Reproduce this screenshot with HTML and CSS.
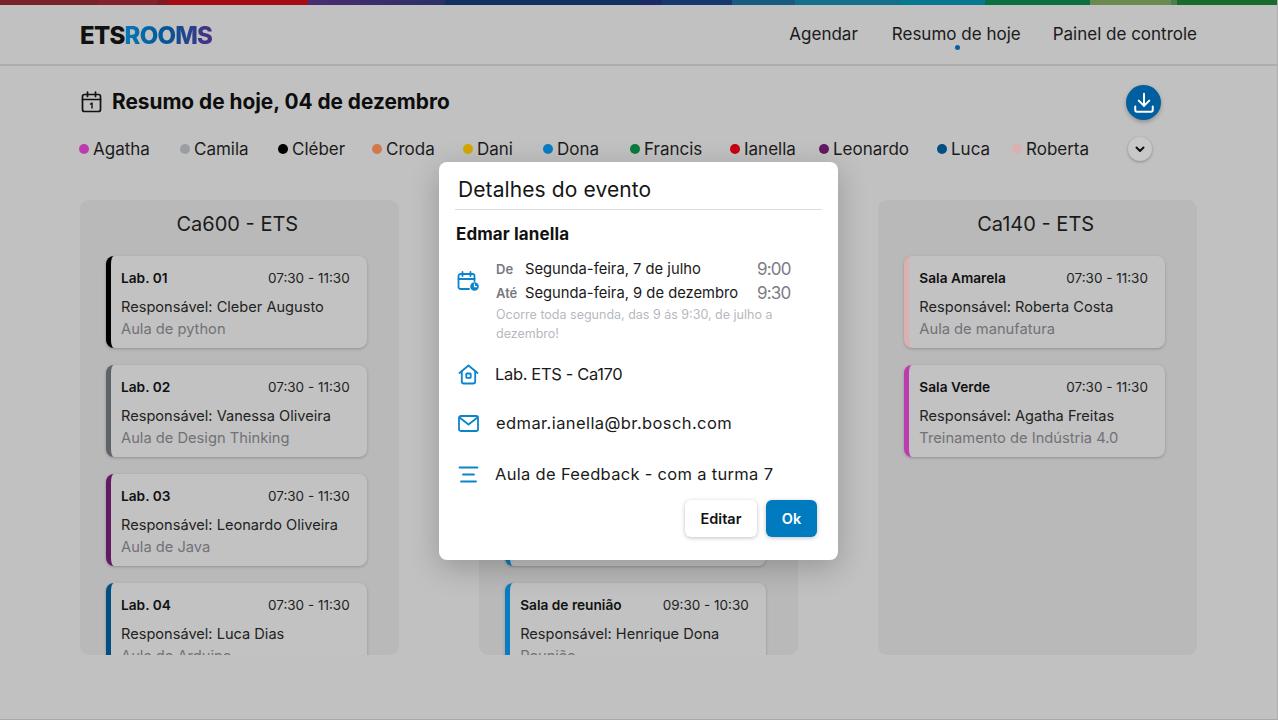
FILE: index.html
```html
<!DOCTYPE html>
<html lang="pt-BR">
<head>
<meta charset="utf-8">
<title>ETS Rooms</title>
<link rel="stylesheet" href="styles.css">
</head>
<body>
<div class="page">
  <div class="rainbow"></div>
  <header class="topbar">
    <div class="logo">ETS<span class="logo-accent">ROOMS</span></div>
    <nav class="nav">
      <a class="nav-link">Agendar</a>
      <a class="nav-link is-active">Resumo de hoje</a>
      <a class="nav-link">Painel de controle</a>
    </nav>
  </header>
  <main class="content">
    <div class="title-row">
      <h1 class="page-title">
        <svg class="title-icon" viewBox="0 0 22 22" fill="none" stroke="#111" stroke-width="1.7" stroke-linecap="round" stroke-linejoin="round"><rect x="1.5" y="3.5" width="18" height="17" rx="2"/><path d="M1.5 8.500h18M6.500 1v4.500M14.500 1v4.500"/><path d="M9.500 13l1.500-1v5" stroke-width="1.400"/></svg>
        Resumo de hoje, 04 de dezembro
      </h1>
      <button class="download-btn" aria-label="Baixar">
        <svg viewBox="0 0 24 24" width="28" height="28" fill="none" stroke="#fff" stroke-width="1.700" stroke-linecap="round" stroke-linejoin="round"><path d="M12 4v10.500M7.500 10l4.500 4.500 4.500-4.500"/><path d="M4.500 15v3a1.500 1.500 0 0 0 1.500 1.500h12a1.500 1.500 0 0 0 1.500-1.500v-3"/></svg>
      </button>
    </div>
    <div class="legend">
      <span class="legend-item"><i class="dot c-agatha"></i>Agatha</span>
      <span class="legend-item"><i class="dot c-camila"></i>Camila</span>
      <span class="legend-item"><i class="dot c-cleber"></i>Cléber</span>
      <span class="legend-item"><i class="dot c-croda"></i>Croda</span>
      <span class="legend-item"><i class="dot c-dani"></i>Dani</span>
      <span class="legend-item"><i class="dot c-dona"></i>Dona</span>
      <span class="legend-item"><i class="dot c-francis"></i>Francis</span>
      <span class="legend-item"><i class="dot c-ianella"></i>Ianella</span>
      <span class="legend-item"><i class="dot c-leonardo"></i>Leonardo</span>
      <span class="legend-item"><i class="dot c-luca"></i>Luca</span>
      <span class="legend-item"><i class="dot c-roberta"></i>Roberta</span>
      <button class="more-btn" aria-label="Mais">
        <svg viewBox="0 0 12 12" width="12" height="12" fill="none" stroke="#111" stroke-width="2" stroke-linecap="round" stroke-linejoin="round"><path d="M2.500 4.500L6 8l3.500-3.500"/></svg>
      </button>
    </div>
    <section class="columns">
      <div class="column">
        <h2 class="column-title">Ca600 - ETS</h2>
        <article class="card b-cleber"><div class="card-head"><span class="card-room">Lab. 01</span><span class="card-time">07:30 - 11:30</span></div><p class="card-owner">Responsável: Cleber Augusto</p><p class="card-desc">Aula de python</p></article>
        <article class="card b-camila"><div class="card-head"><span class="card-room">Lab. 02</span><span class="card-time">07:30 - 11:30</span></div><p class="card-owner">Responsável: Vanessa Oliveira</p><p class="card-desc">Aula de Design Thinking</p></article>
        <article class="card b-leonardo"><div class="card-head"><span class="card-room">Lab. 03</span><span class="card-time">07:30 - 11:30</span></div><p class="card-owner">Responsável: Leonardo Oliveira</p><p class="card-desc">Aula de Java</p></article>
        <article class="card b-luca"><div class="card-head"><span class="card-room">Lab. 04</span><span class="card-time">07:30 - 11:30</span></div><p class="card-owner">Responsável: Luca Dias</p><p class="card-desc">Aula de Arduino</p></article>
      </div>
      <div class="column">
        <div class="column-title"></div>
        <article class="card b-dona"></article>
        <article class="card b-dona"></article>
        <article class="card b-dona"></article>
        <article class="card b-dona"><div class="card-head"><span class="card-room">Sala de reunião</span><span class="card-time">09:30 - 10:30</span></div><p class="card-owner">Responsável: Henrique Dona</p><p class="card-desc">Reunião</p></article>
      </div>
      <div class="column">
        <h2 class="column-title">Ca140 - ETS</h2>
        <article class="card b-roberta"><div class="card-head"><span class="card-room">Sala Amarela</span><span class="card-time">07:30 - 11:30</span></div><p class="card-owner">Responsável: Roberta Costa</p><p class="card-desc">Aula de manufatura</p></article>
        <article class="card b-agatha"><div class="card-head"><span class="card-room">Sala Verde</span><span class="card-time">07:30 - 11:30</span></div><p class="card-owner">Responsável: Agatha Freitas</p><p class="card-desc">Treinamento de Indústria 4.0</p></article>
      </div>
    </section>
  </main>

  <div class="modal" role="dialog">
    <h3 class="modal-title">Detalhes do evento</h3>
    <p class="modal-name">Edmar Ianella</p>
    <div class="modal-when">
      <svg class="icon icon-cal" viewBox="0 0 23 21" fill="none" stroke="#0a84cc" stroke-width="1.800" stroke-linecap="round" stroke-linejoin="round"><path d="M12 18H3.500A2 2 0 0 1 1.500 16V5a2 2 0 0 1 2-2h12a2 2 0 0 1 2 2v5"/><path d="M1.500 8h16M5.500 1v4M13.500 1v4"/><circle cx="17.500" cy="15.500" r="4.300" fill="#0a84cc" stroke="none"/><path d="M17.500 13.200v2.500h2" stroke="#fff" stroke-width="1.200"/></svg>
      <div class="when-body">
        <div class="when-row"><span class="when-label">De</span><span class="when-date">Segunda-feira, 7 de julho</span><span class="when-time">9:00</span></div>
        <div class="when-row"><span class="when-label">Até</span><span class="when-date">Segunda-feira, 9 de dezembro</span><span class="when-time">9:30</span></div>
        <p class="when-note">Ocorre toda segunda, das 9 ás 9:30, de julho a dezembro!</p>
      </div>
    </div>
    <div class="modal-row row-place">
      <svg class="icon" viewBox="0 0 21 21" fill="none" stroke="#0a84cc" stroke-width="1.800" stroke-linecap="round" stroke-linejoin="round"><path d="M1.500 9L10.500 1.500 19.500 9"/><path d="M3.800 7.500V17.500a2 2 0 0 0 2 2h9.400a2 2 0 0 0 2-2V7.500"/><rect x="8.300" y="9.500" width="4.400" height="4.400" rx=".6"/></svg>
      <span class="row-text">Lab. ETS - Ca170</span>
    </div>
    <div class="modal-row row-mail">
      <svg class="icon" viewBox="0 0 21 17" fill="none" stroke="#0a84cc" stroke-width="1.800" stroke-linecap="round" stroke-linejoin="round"><rect x="1" y="1" width="19" height="15" rx="1.800"/><path d="M1.500 2.500l9 7 9-7"/></svg>
      <span class="row-text">edmar.ianella@br.bosch.com</span>
    </div>
    <div class="modal-row row-desc">
      <svg class="icon" viewBox="0 0 21 17" fill="none" stroke="#0a84cc" stroke-width="1.800" stroke-linecap="round"><path d="M1.500 1.500h18M5 8.500h11M3 15.500h15"/></svg>
      <span class="row-text">Aula de Feedback - com a turma 7</span>
    </div>
    <div class="modal-actions">
      <button class="btn btn-light">Editar</button>
      <button class="btn btn-primary">Ok</button>
    </div>
  </div>
</div>
</body>
</html>
```

FILE: styles.css
```css
* { box-sizing: border-box; }
html, body { margin: 0; padding: 0; }
body {
  width: 1278px;
  height: 720px;
  overflow: hidden;
  background: #c1c1c1;
  font-family: "Inter", "Noto Sans", sans-serif;
  color: #141414;
}
p, h1, h2, h3 { margin: 0; font-weight: 400; }

.page {
  position: relative;
  height: 720px;
  border-bottom: 1px solid #a9a9a9;
  border-right: 1px solid #b0b0b0;
  overflow: hidden;
}

.rainbow {
  height: 5px;
  width: 1278px;
  background: linear-gradient(90deg,
    #7a2028 0, #7a2028 98px, #83222c 98px, #83222c 157px, #7f1a20 157px, #7f1a20 167px,
    #a40d14 167px, #a40d14 308px,
    #4a2c70 308px, #2a3166 445px, #12305f 445px, #12305f 640px,
    #1c2a66 640px, #1c2a66 662px, #17386f 662px, #17386f 732px,
    #1a5a80 732px, #1a5a80 795px, #13708a 795px, #13708a 900px,
    #06788f 900px, #06788f 985px, #0a7040 985px, #0a7040 1090px,
    #6a8a50 1090px, #6a8a50 1171px, #4a8050 1171px, #4a8050 1177px,
    #1a6a2e 1177px, #1a6a2e 1278px);
}

.topbar {
  height: 61px;
  padding: 0 80px;
  display: flex;
  align-items: center;
  justify-content: space-between;
  border-bottom: 2px solid #adadad;
}
.logo {
  font-size: 24px;
  font-weight: 800;
  letter-spacing: -0.75px;
  color: #111;
  line-height: 1;
  margin-top: 2px;
}
.logo-accent {
  background: linear-gradient(90deg, #0a78b5, #00589a 45%, #4a2f80);
  -webkit-background-clip: text;
  background-clip: text;
  color: transparent;
}
.nav { display: flex; gap: 32px; margin-top: -1px; }
.nav-link {
  position: relative;
  font-size: 17px;
  line-height: 24px;
  color: #1a1a1a;
}
.nav-link.is-active { margin-left: 2px; }
.nav-link.is-active::after {
  content: "";
  position: absolute;
  left: 50%;
  top: 23px;
  width: 5px;
  height: 5px;
  margin-left: -1px;
  border-radius: 50%;
  background: #0a5e99;
}

.content { padding: 0 80px; }

.title-row {
  height: 71px;
  padding-right: 36px;
  display: flex;
  align-items: center;
  justify-content: space-between;
}
.page-title {
  display: flex;
  align-items: center;
  gap: 9px;
  margin-left: 1px;
  font-size: 20.800px;
  font-weight: 700;
  color: #0d0d0d;
}
.title-icon { width: 22px; height: 22px; flex: none; }
.download-btn {
  width: 35px;
  height: 35px;
  margin-top: 2px;
  padding: 0;
  border: 0;
  border-radius: 50%;
  background: #005f9e;
  box-shadow: 0 2px 4px rgba(0,0,0,.25);
  display: flex;
  align-items: center;
  justify-content: center;
}

.legend {
  display: grid;
  grid-template-columns: 101px 98px 94px 91px 80px 87px 100px 89px 118px 75px 116px auto;
  align-items: center;
  height: 26px;
  margin: -1px 0 0 -1px;
}
.legend-item {
  display: flex;
  align-items: center;
  gap: 4px;
  font-size: 17px;
  line-height: 24px;
  color: #1c1c1c;
  white-space: nowrap;
}
.dot { width: 10px; height: 10px; border-radius: 50%; flex: none; }
.c-agatha { background: #bc3cb0; }
.c-camila { background: #9a9ea3; }
.c-cleber { background: #000; }
.c-croda { background: #d07a4a; }
.c-dani { background: #d4a600; }
.c-dona { background: #0a7cc0; }
.c-francis { background: #0a7a40; }
.c-ianella { background: #c80010; }
.c-leonardo { background: #611a63; }
.c-luca { background: #004f80; }
.c-roberta { background: #dcb0b0; }
.more-btn {
  width: 24px;
  height: 24px;
  padding: 0;
  border: 0;
  border-radius: 50%;
  background: #c8c8c8;
  box-shadow: 0 1px 3px rgba(0,0,0,.3);
  display: flex;
  align-items: center;
  justify-content: center;
}

.columns {
  display: grid;
  grid-template-columns: repeat(3, 1fr);
  gap: 80.500px;
  margin-top: 38px;
}
.column {
  height: 455px;
  overflow: hidden;
  padding: 0 32px 0 26px;
  background: #b9b9b9;
  border-radius: 9px;
  display: flex;
  flex-direction: column;
  gap: 17px;
}
.column-title {
  flex: none;
  height: 39px;
  padding-top: 10px;
  font-size: 20px;
  line-height: 28px;
  text-align: center;
  color: #1a1a1a;
  margin-right: -2px;
}
.card {
  flex: none;
  height: 92px;
  padding: 11px 17px 0 10px;
  background: #c2c2c2;
  border-left: 5px solid;
  border-radius: 8px;
  box-shadow: 0 1px 3px rgba(0,0,0,.22);
}
.b-cleber { border-left-color: #000; }
.b-camila { border-left-color: #5f6268; }
.b-leonardo { border-left-color: #611a63; }
.b-luca { border-left-color: #004f80; }
.b-dona { border-left-color: #0a7cc0; }
.b-roberta { border-left-color: #dcb0b0; }
.b-agatha { border-left-color: #bc3cb0; }
.card-head {
  display: flex;
  justify-content: space-between;
  align-items: center;
  height: 22px;
}
.card-room { font-size: 13.700px; font-weight: 600; color: #111; }
.card-time { font-size: 13.500px; color: #222; }
.card-owner { margin-top: 7px; font-size: 14.600px; line-height: 22px; color: #222; }
.card-desc { font-size: 14.700px; line-height: 22px; color: #717178; }

.modal {
  position: absolute;
  left: 439px;
  top: 162px;
  width: 399px;
  height: 398px;
  padding: 14px 16px 0 16px;
  background: #fff;
  border-radius: 8px;
  box-shadow: 0 8px 30px rgba(0,0,0,.22);
}
.modal-title {
  padding: 0 0 5px 3px;
  height: 34px;
  font-size: 21px;
  line-height: 28px;
  letter-spacing: .1px;
  color: #161616;
  border-bottom: 1px solid #dcdcdc;
}
.modal-name {
  margin-top: 13px;
  padding-left: 1px;
  font-size: 17px;
  line-height: 22px;
  letter-spacing: .1px;
  font-weight: 700;
  color: #111;
}
.modal-when {
  margin-top: 12px;
  display: flex;
  align-items: flex-start;
  gap: 17px;
  padding-left: 2px;
}
.icon { flex: none; width: 21px; height: 21px; }
.icon-cal { width: 23px; height: 21px; margin-top: 14px; margin-right: -1px; }
.when-body { flex: 1; }
.when-row {
  display: grid;
  grid-template-columns: 29px 232px auto;
  align-items: center;
  height: 24px;
}
.when-label { font-size: 13px; font-weight: 600; color: #77777f; }
.when-date { font-size: 14.750px; color: #1a1a1a; white-space: nowrap; }
.when-time { font-size: 17px; letter-spacing: -.8px; color: #7d7d85; }
.when-note {
  width: 290px;
  font-size: 12.500px;
  line-height: 19px;
  color: #b6b9c0;
}
.modal-row {
  display: flex;
  align-items: center;
  gap: 17px;
  padding-left: 3px;
  height: 24px;
}
.row-place { margin-top: 19px; }
.row-mail { margin-top: 25px; }
.row-desc { margin-top: 27px; }
.row-text { font-size: 16.500px; color: #1a1a1a; white-space: nowrap; }
.row-place .row-text { letter-spacing: -.35px; margin-left: -1px; }
.row-mail .row-text { letter-spacing: .4px; }
.row-desc .row-text { letter-spacing: .31px; margin-left: -1px; }
.modal-actions {
  display: flex;
  justify-content: flex-end;
  gap: 9px;
  margin-top: 14px;
  padding-right: 5px;
}
.btn {
  height: 37px;
  border: 0;
  border-radius: 6px;
  font-family: inherit;
  font-size: 14.500px;
  font-weight: 600;
}
.btn-light { width: 72px; background: #fff; color: #111; box-shadow: 0 1px 4px rgba(0,0,0,.25); }
.btn-primary { width: 51px; background: #007bc0; color: #fff; box-shadow: 0 1px 4px rgba(0,0,0,.25); }
```
